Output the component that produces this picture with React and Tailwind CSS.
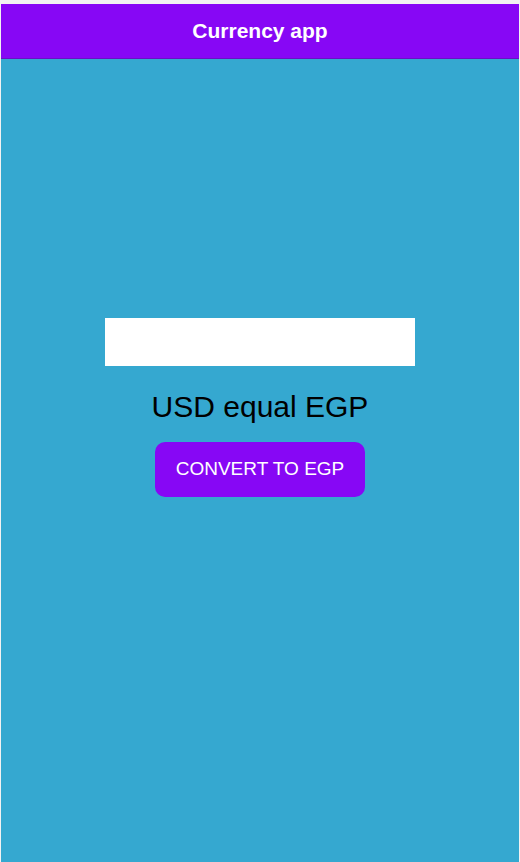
export default function App() {
  return (
    <div className="min-h-[862px] bg-[#f2f2f2] pt-1 px-px font-['Liberation_Sans',Arial,sans-serif]">
      <div className="flex min-h-[858px] flex-col bg-[#35a8d0]">
        {/* header */}
        <div className="flex h-[55px] items-center justify-center border-b border-[#6b10c4] bg-[#8707f5]">
          <h1 className="text-[21px] font-bold text-white">Currency app</h1>
        </div>

        {/* converter */}
        <div className="flex flex-col items-center pt-[259px]">
          <input type="text" className="h-12 w-[310px] bg-white px-3 text-lg outline-none" />
          <p className="mt-[23px] text-[30px] leading-9 text-black">USD equal EGP</p>
          <button className="mt-[17px] flex h-[55px] w-[210px] items-center justify-center rounded-[10px] bg-[#8707f5] text-[19px] text-white">
            CONVERT TO EGP
          </button>
        </div>
      </div>
    </div>
  )
}
